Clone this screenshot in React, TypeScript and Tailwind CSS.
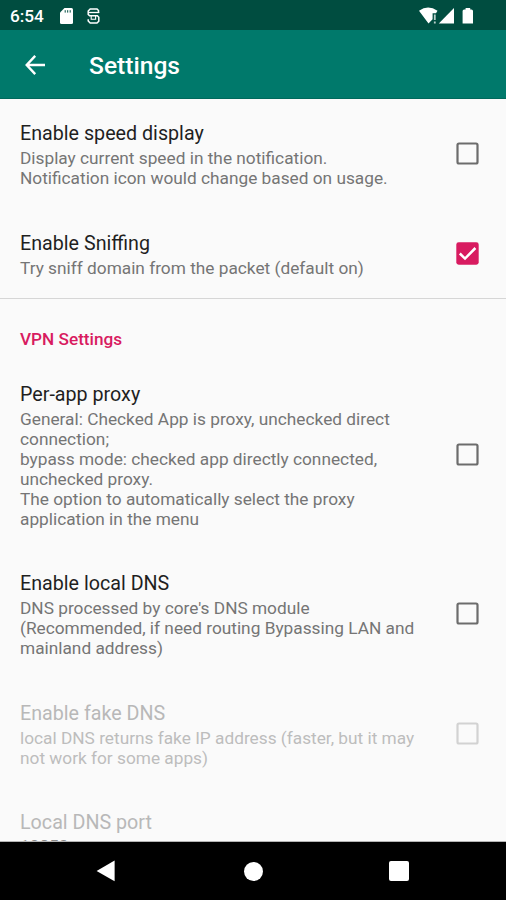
type Preference = {
  title: string;
  summary: string[];
  checked?: boolean;
  disabled?: boolean;
};

const general: Preference[] = [
  {
    title: "Enable speed display",
    summary: [
      "Display current speed in the notification.",
      "Notification icon would change based on usage.",
    ],
  },
  {
    title: "Enable Sniffing",
    summary: ["Try sniff domain from the packet (default on)"],
    checked: true,
  },
];

const vpn: Preference[] = [
  {
    title: "Per-app proxy",
    summary: [
      "General: Checked App is proxy, unchecked direct",
      "connection;",
      "bypass mode: checked app directly connected,",
      "unchecked proxy.",
      "The option to automatically select the proxy",
      "application in the menu",
    ],
  },
  {
    title: "Enable local DNS",
    summary: [
      "DNS processed by core's DNS module",
      "(Recommended, if need routing Bypassing LAN and",
      "mainland address)",
    ],
  },
  {
    title: "Enable fake DNS",
    summary: [
      "local DNS returns fake IP address (faster, but it may",
      "not work for some apps)",
    ],
    disabled: true,
  },
];

function Checkbox({ checked, disabled }: { checked?: boolean; disabled?: boolean }) {
  return (
    <svg
      className={`mb-[3px] h-[23px] w-[23px] shrink-0 ${disabled ? "text-[#d2d2d2]" : "text-[#6c6c6c]"}`}
      viewBox="0 0 23 23"
      fill="none"
    >
      {checked ? (
        <>
          <rect x="0.3" y="0.3" width="22.4" height="22.4" rx="2.4" fill="#d81b60" />
          <path d="M3.8 11.5 9 16.6 19.4 6" stroke="#fff" strokeWidth="2.5" />
        </>
      ) : (
        <rect x="1.5" y="1.5" width="20" height="20" rx="1.5" stroke="currentColor" strokeWidth="2.2" />
      )}
    </svg>
  );
}

function PreferenceRow({ title, summary, checked, disabled }: Preference) {
  return (
    <div className="flex items-center justify-between pt-[23px] pr-[27px] pb-[20.5px] pl-5">
      <div className="whitespace-nowrap">
        <p className={`text-[19.7px] leading-6 ${disabled ? "text-[#b8b8b8]" : "text-[#1f1f1f]"}`}>
          {title}
        </p>
        <div
          className={`mt-[2px] text-[17.28px] leading-5 ${
            disabled ? "text-[#bdbdbd]" : "text-[#757575]"
          }`}
        >
          {summary.map((line) => (
            <p key={line}>{line}</p>
          ))}
        </div>
      </div>
      <Checkbox checked={checked} disabled={disabled} />
    </div>
  );
}

function StatusBar() {
  return (
    <div className="flex h-[30px] shrink-0 items-center bg-[#004d40] pr-[31px] pl-[10px] text-white">
      <span className="w-[50px] pt-[3px] text-[17.2px] font-medium">6:54</span>
      <svg className="mt-px h-4 w-[13px]" viewBox="0 0 13 16">
        <path d="M4.5 0H11.5Q13 0 13 1.5V14.5Q13 16 11.5 16H1.5Q0 16 0 14.5V4.5Z" fill="#fff" />
        <path d="M5.2 2.2V4.6M7.7 2.2V4.6M10.2 2.2V4.6" stroke="#004d40" strokeWidth="1" />
      </svg>
      <svg className="mt-px ml-[14px] h-4 w-[13px]" viewBox="0 0 13 16" fill="none" stroke="#fff" strokeWidth="1.5">
        <path d="M11.5 5V2.6L10 1H3.2L1.2 3V6.4L2.6 7.8H10.4L11.8 9.2V13.2L10 15H3.2L1.2 13V11.2" />
        <path d="M1.2 4.5H12.2" strokeWidth="1.3" />
        <path d="M4.2 7.8V11.2H8.6V7.8" strokeWidth="1.1" />
      </svg>
      <svg className="ml-auto h-[17px] w-[56px]" viewBox="0 0 56 17" fill="#fff">
        <path d="M0 3.8Q9 -2.6 18.5 3.8L17 6.2H13.6V12.2L9.5 16.5Z" />
        <path d="M15.8 7.4V13M15.8 14.4V16.4" stroke="#b9cfca" strokeWidth="1.8" />
        <path d="M19.8 16.5 35 1V16.5Z" />
        <path d="M46.6 1H51.2V2.5H52.4Q54 2.5 54 4.1V16.5H43.6V4.1Q43.6 2.5 45.2 2.5H46.6Z" />
      </svg>
    </div>
  );
}

function NavigationBar() {
  return (
    <div className="flex h-[59px] shrink-0 items-center justify-between border-t border-[#b5b5b5] bg-black pr-[97px] pl-[96px]">
      <svg className="h-[22px] w-[19px]" viewBox="0 0 19 22">
        <path d="M18.6 0.6V21.2L0.6 10.9Z" fill="#fff" />
      </svg>
      <span className="ml-[2px] h-[19px] w-[19px] rounded-full bg-white" />
      <span className="h-5 w-5 rounded-[2px] bg-white" />
    </div>
  );
}

export default function App() {
  return (
    <div className="flex h-[900px] w-[506px] flex-col overflow-hidden bg-[#fafafa] font-['Roboto',sans-serif]">
      <StatusBar />
      <header className="flex h-[69px] shrink-0 items-center border-b border-[#00695c] bg-[#00796b] pl-[25px] text-white">
        <svg className="mt-px h-5 w-5" viewBox="0 0 20 20" fill="none" stroke="#fff" strokeWidth="2.4">
          <path d="M20 10H2M10.2 0.9 1.7 10l8.5 9.1" />
        </svg>
        <h1 className="ml-11 pt-1 text-[24.6px] leading-none font-medium">Settings</h1>
      </header>
      <main className="min-h-0 flex-1 overflow-hidden">
        {general.map((item) => (
          <PreferenceRow key={item.title} {...item} />
        ))}
        <h2 className="h-[61.5px] border-t border-[#d6d6d6] pt-[29px] pl-5 text-[17.2px] leading-[22px] font-medium text-[#d81b60]">
          VPN Settings
        </h2>
        {vpn.map((item) => (
          <PreferenceRow key={item.title} {...item} />
        ))}
        <div className="pt-[23px] pl-5">
          <p className="text-[19.7px] leading-6 text-[#b8b8b8]">Local DNS port</p>
          <p className="mt-px text-[17.28px] leading-5 text-[#8a8a8a]">10853</p>
        </div>
      </main>
      <NavigationBar />
    </div>
  );
}
